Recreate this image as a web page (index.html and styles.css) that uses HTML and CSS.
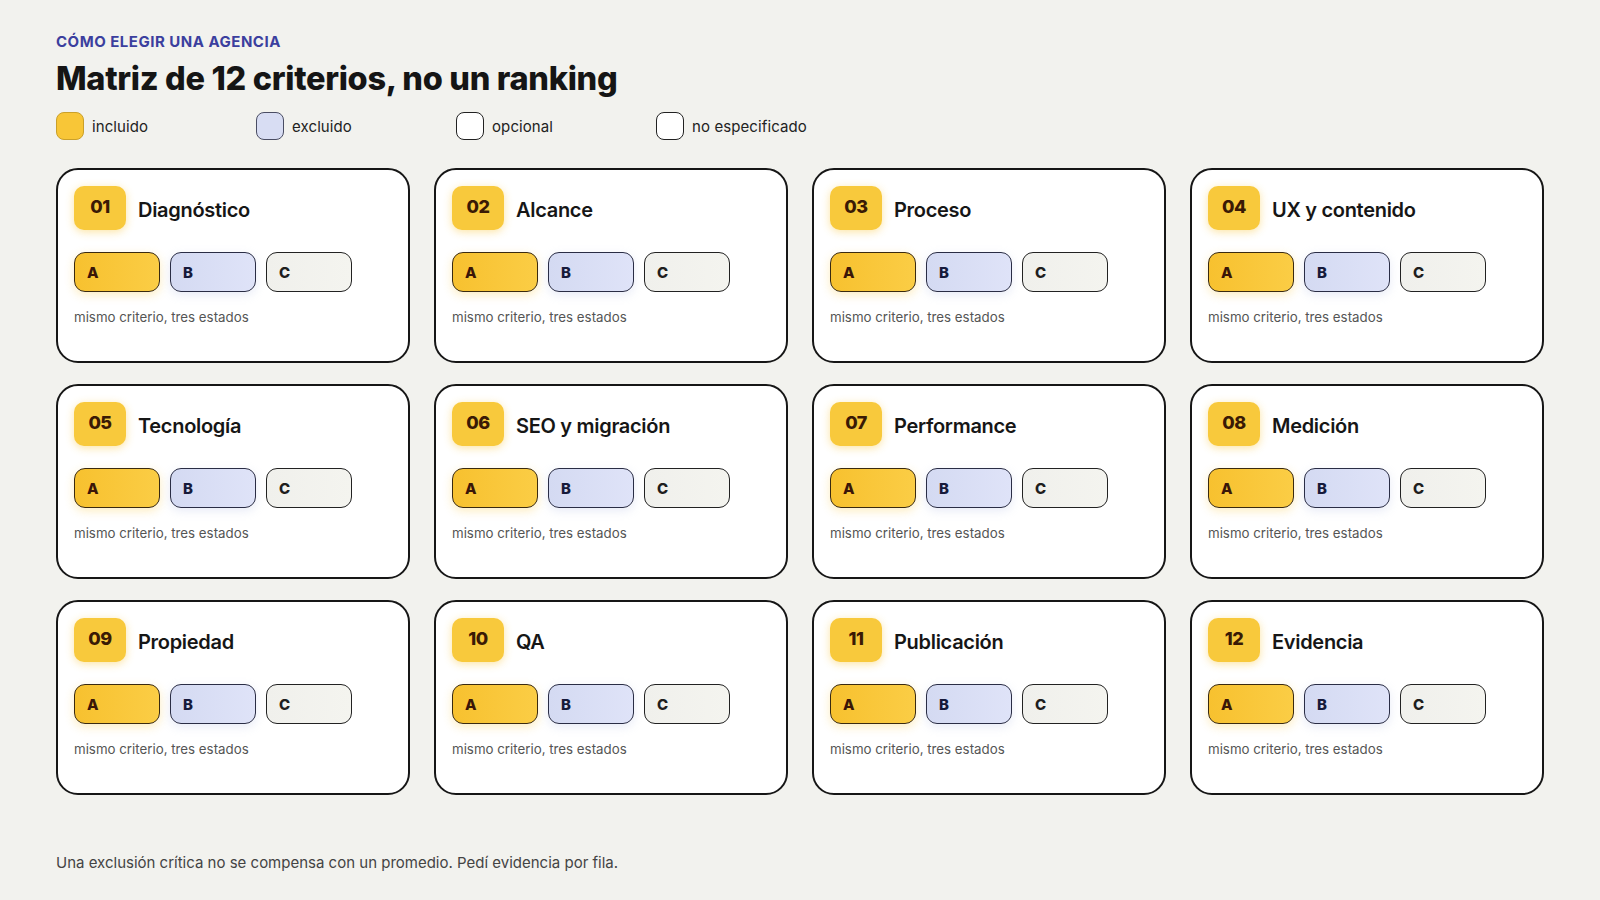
FILE: index.html
```html
<!DOCTYPE html>
<html lang="es">
<head>
<meta charset="utf-8">
<title>Matriz de 12 criterios</title>
<link rel="stylesheet" href="styles.css">
</head>
<body>
<main class="page">
  <header class="head">
    <p class="eyebrow">CÓMO ELEGIR UNA AGENCIA</p>
    <h1 class="title">Matriz de 12 criterios, no un ranking</h1>
    <ul class="legend">
      <li class="legend-item"><span class="swatch swatch-in"></span>incluido</li>
      <li class="legend-item"><span class="swatch swatch-ex"></span>excluido</li>
      <li class="legend-item"><span class="swatch swatch-op"></span>opcional</li>
      <li class="legend-item"><span class="swatch swatch-op"></span>no especificado</li>
    </ul>
  </header>

  <section class="grid">
    <article class="card"><div class="card-head"><span class="num">01</span><h2 class="card-title">Diagnóstico</h2></div><div class="pills"><span class="pill pill-a">A</span><span class="pill pill-b">B</span><span class="pill pill-c">C</span></div><p class="note">mismo criterio, tres estados</p></article>
    <article class="card"><div class="card-head"><span class="num">02</span><h2 class="card-title">Alcance</h2></div><div class="pills"><span class="pill pill-a">A</span><span class="pill pill-b">B</span><span class="pill pill-c">C</span></div><p class="note">mismo criterio, tres estados</p></article>
    <article class="card"><div class="card-head"><span class="num">03</span><h2 class="card-title">Proceso</h2></div><div class="pills"><span class="pill pill-a">A</span><span class="pill pill-b">B</span><span class="pill pill-c">C</span></div><p class="note">mismo criterio, tres estados</p></article>
    <article class="card"><div class="card-head"><span class="num">04</span><h2 class="card-title">UX y contenido</h2></div><div class="pills"><span class="pill pill-a">A</span><span class="pill pill-b">B</span><span class="pill pill-c">C</span></div><p class="note">mismo criterio, tres estados</p></article>
    <article class="card"><div class="card-head"><span class="num">05</span><h2 class="card-title">Tecnología</h2></div><div class="pills"><span class="pill pill-a">A</span><span class="pill pill-b">B</span><span class="pill pill-c">C</span></div><p class="note">mismo criterio, tres estados</p></article>
    <article class="card"><div class="card-head"><span class="num">06</span><h2 class="card-title">SEO y migración</h2></div><div class="pills"><span class="pill pill-a">A</span><span class="pill pill-b">B</span><span class="pill pill-c">C</span></div><p class="note">mismo criterio, tres estados</p></article>
    <article class="card"><div class="card-head"><span class="num">07</span><h2 class="card-title">Performance</h2></div><div class="pills"><span class="pill pill-a">A</span><span class="pill pill-b">B</span><span class="pill pill-c">C</span></div><p class="note">mismo criterio, tres estados</p></article>
    <article class="card"><div class="card-head"><span class="num">08</span><h2 class="card-title">Medición</h2></div><div class="pills"><span class="pill pill-a">A</span><span class="pill pill-b">B</span><span class="pill pill-c">C</span></div><p class="note">mismo criterio, tres estados</p></article>
    <article class="card"><div class="card-head"><span class="num">09</span><h2 class="card-title">Propiedad</h2></div><div class="pills"><span class="pill pill-a">A</span><span class="pill pill-b">B</span><span class="pill pill-c">C</span></div><p class="note">mismo criterio, tres estados</p></article>
    <article class="card"><div class="card-head"><span class="num">10</span><h2 class="card-title">QA</h2></div><div class="pills"><span class="pill pill-a">A</span><span class="pill pill-b">B</span><span class="pill pill-c">C</span></div><p class="note">mismo criterio, tres estados</p></article>
    <article class="card"><div class="card-head"><span class="num">11</span><h2 class="card-title">Publicación</h2></div><div class="pills"><span class="pill pill-a">A</span><span class="pill pill-b">B</span><span class="pill pill-c">C</span></div><p class="note">mismo criterio, tres estados</p></article>
    <article class="card"><div class="card-head"><span class="num">12</span><h2 class="card-title">Evidencia</h2></div><div class="pills"><span class="pill pill-a">A</span><span class="pill pill-b">B</span><span class="pill pill-c">C</span></div><p class="note">mismo criterio, tres estados</p></article>
  </section>

  <footer class="foot">Una exclusión crítica no se compensa con un promedio. Pedí evidencia por fila.</footer>
</main>
</body>
</html>
```

FILE: styles.css
```css
* { box-sizing: border-box; }
html, body { margin: 0; padding: 0; }
body {
  background: #f2f2ee;
  font-family: Inter, "Noto Sans", "Liberation Sans", sans-serif;
  color: #161616;
  width: 1600px;
  height: 900px;
  overflow: hidden;
}
.page {
  padding: 32px 56px 0 56px;
  display: flex;
  flex-direction: column;
}
.head { display: flex; flex-direction: column; }
.eyebrow {
  margin: 0;
  font-size: 15px;
  line-height: 20px;
  font-weight: 700;
  color: #3b3f9e;
  letter-spacing: 0.5px;
}
.title {
  margin: 7px 0 0 0;
  font-size: 32.5px;
  line-height: 40px;
  font-weight: 800;
  letter-spacing: -0.3px;
  color: #151515;
}
.legend {
  list-style: none;
  margin: 13px 0 0 0;
  padding: 0;
  display: flex;
}
.legend-item {
  width: 200px;
  display: flex;
  align-items: center;
  gap: 8px;
  font-size: 15px;
  color: #222;
  letter-spacing: 0.1px;
}
.swatch {
  width: 28px;
  height: 28px;
  border-radius: 8px;
  border: 1px solid #222;
}
.swatch-in { background: #f8c637; border-color: #caa02a; }
.swatch-ex { background: #d8ddf3; border-color: #4a4d63; }
.swatch-op { background: #ffffff; }

.grid {
  margin-top: 28px;
  display: grid;
  grid-template-columns: repeat(4, 354px);
  grid-auto-rows: 195px;
  column-gap: 24px;
  row-gap: 21px;
}
.card {
  background: #ffffff;
  border: 2px solid #161616;
  border-radius: 22px;
  padding: 16px 16px;
  display: flex;
  flex-direction: column;
}
.card-head {
  display: flex;
  align-items: center;
  gap: 12px;
  height: 44px;
}
.num {
  width: 52px;
  height: 44px;
  border-radius: 10px;
  background: #f8c93c;
  box-shadow: 0 2px 8px rgba(248, 196, 50, 0.45);
  display: flex;
  align-items: center;
  justify-content: center;
  font-weight: 800;
  font-size: 18px;
  color: #3a1a05;
  letter-spacing: -0.5px;
  padding-bottom: 3px;
}
.card-title {
  margin: 3px 0 0 0;
  font-size: 20px;
  font-weight: 600;
  letter-spacing: -0.3px;
  color: #161616;
}
.pills {
  margin-top: 22px;
  display: flex;
  gap: 10px;
}
.pill {
  width: 86px;
  height: 40px;
  border-radius: 11px;
  border: 1px solid #222;
  display: flex;
  align-items: center;
  padding-left: 12px;
  font-weight: 800;
  font-size: 15px;
}
.pill-a { background: linear-gradient(90deg, #f7c12f, #fbcd45); color: #3a1608; border-color: #3a2a10; box-shadow: 0 3px 10px rgba(248, 196, 50, 0.3); }
.pill-b { background: linear-gradient(90deg, #d4daf2, #dfe3f8); color: #161a3a; border-color: #2a2d45; box-shadow: 0 3px 10px rgba(180, 190, 230, 0.3); }
.pill-c { background: linear-gradient(90deg, #f0f0ec, #f4f4ef); color: #1e1e1e; }
.note {
  margin: 16px 0 0 0;
  font-size: 13.3px;
  line-height: 18px;
  color: #555;
  letter-spacing: 0;
}
.foot {
  margin-top: 58px;
  font-size: 15px;
  line-height: 20px;
  color: #444;
  letter-spacing: 0;
}
```
